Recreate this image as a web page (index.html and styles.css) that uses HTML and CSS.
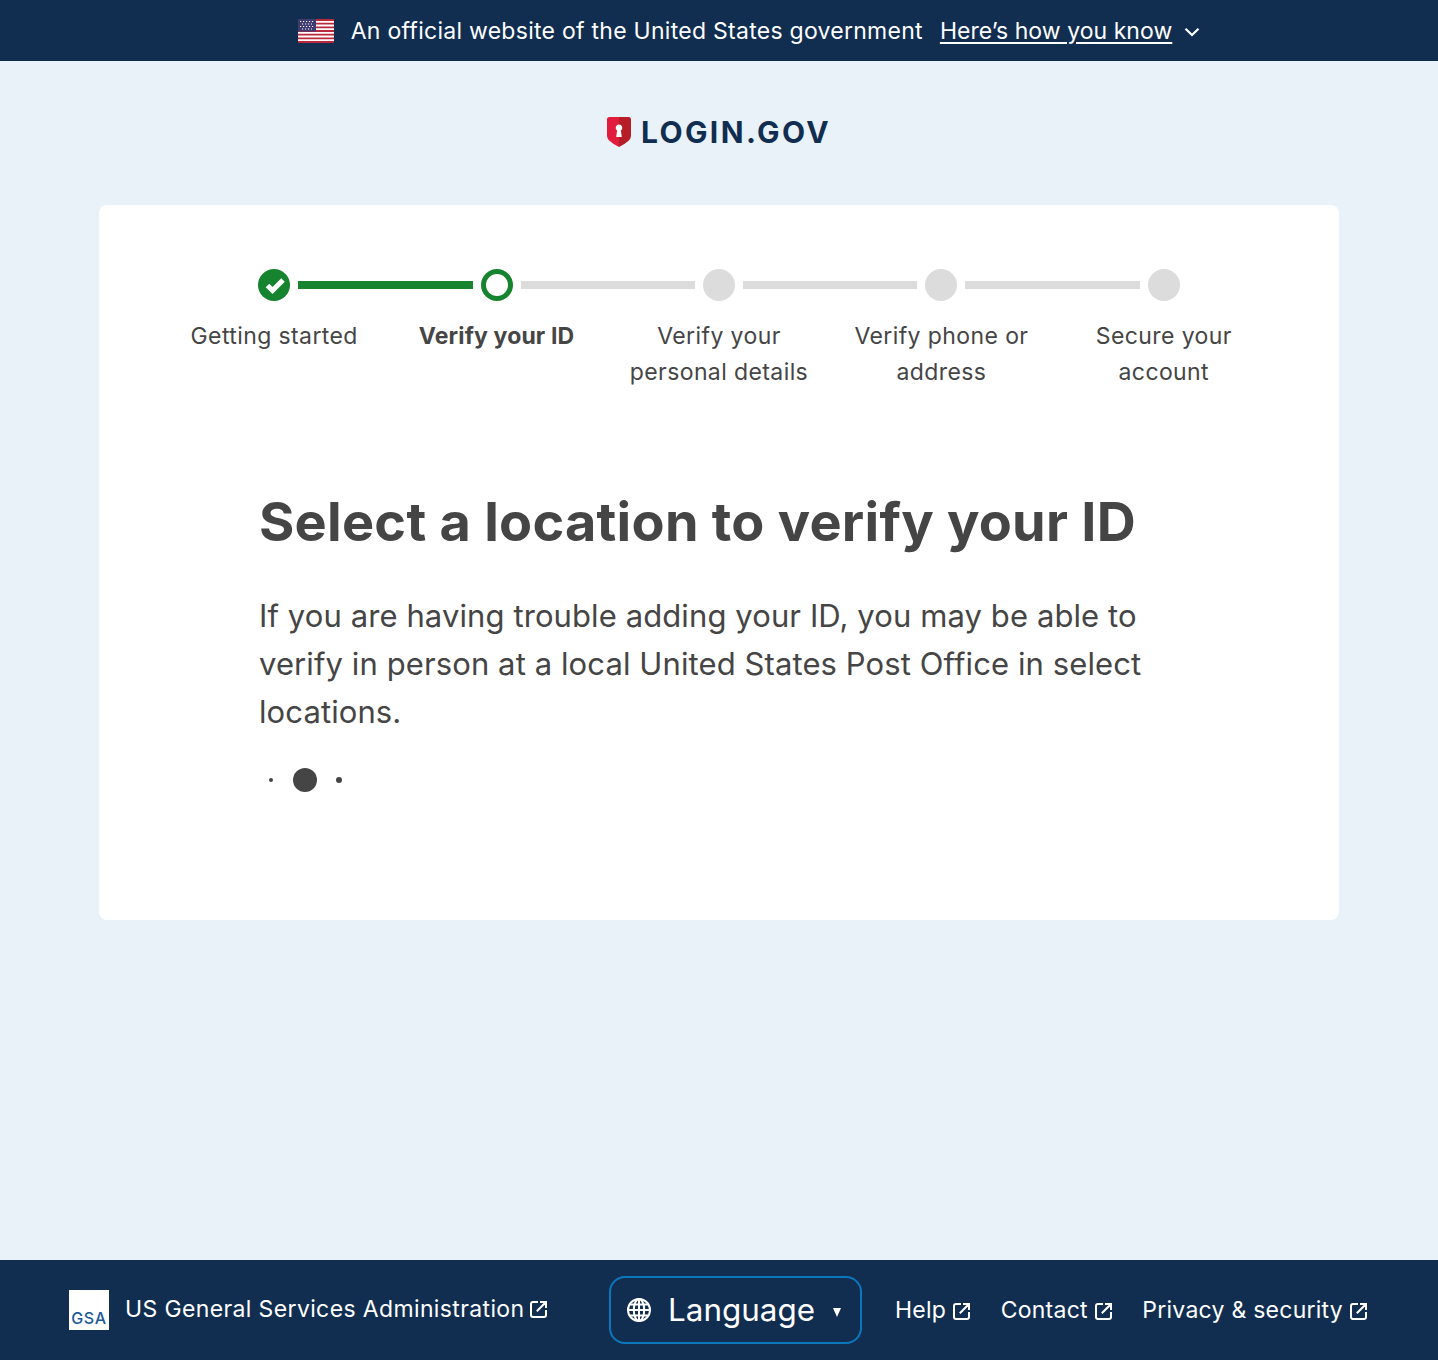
FILE: index.html
```html
<!DOCTYPE html>
<html lang="en">
<head>
    <meta charset="UTF-8">
    <meta name="viewport" content="width=device-width, initial-scale=1.0">
    <title>Login.gov</title>
    <link rel="stylesheet" href="styles.css">
</head>
<body>
    <svg class="icon-defs" width="0" height="0" aria-hidden="true">
        <symbol id="launch" viewBox="0 0 18 18">
            <path d="M8 2H3A2 2 0 0 0 1 4v11a2 2 0 0 0 2 2h11a2 2 0 0 0 2-2v-5M6.800 11.200 15.800 2.200M10 2h6v6" fill="none" stroke="currentColor" stroke-width="2"/>
        </symbol>
    </svg>

    <div class="banner">
        <svg class="flag" viewBox="0 0 36 24" aria-hidden="true">
            <rect width="36" height="24" fill="#fff"/>
            <path d="M0 1h36M0 4.700h36M0 8.400h36M0 12h36M0 15.700h36M0 19.400h36M0 23h36" stroke="#b9283c" stroke-width="1.800"/>
            <rect width="18" height="12.500" fill="#3e3a72"/>
            <path d="M2 2.500h14M4 5h10M2 7.500h14M4 10h10" stroke="#fff" stroke-width="1.100" stroke-dasharray="1.200 1.800"/>
        </svg>
        <span class="banner-text">An official website of the United States government</span>
        <a class="banner-link" href="#">Here’s how you know</a>
        <svg class="chevron" viewBox="0 0 16 10" aria-hidden="true">
            <path d="M1.500 1.800 8 8l6.500-6.200" fill="none" stroke="#fff" stroke-width="2.200"/>
        </svg>
    </div>

    <main class="page">
        <div class="logo">
            <svg class="shield" viewBox="0 0 24 30" aria-hidden="true">
                <path d="M12 0H2.500A2.500 2.500 0 0 0 0 2.500V19Q0 24 12 30z" fill="#e21c3d"/>
                <path d="M12 0h9.500A2.500 2.500 0 0 1 24 2.500V19Q24 24 12 30z" fill="#b51d28"/>
                <path d="M12 7.500a3.300 3.300 0 0 1 1.900 6l.9 6.500H9.200l.9-6.500a3.300 3.300 0 0 1 1.900-6z" fill="#fff"/>
            </svg>
            <span class="logo-text">LOGIN.GOV</span>
        </div>

        <section class="card">
            <ol class="steps">
                <li class="step step-done">
                    <span class="step-dot">
                        <svg viewBox="0 0 32 32" aria-hidden="true">
                            <path d="M9.500 16.500l5 5L25 11" fill="none" stroke="#fff" stroke-width="5"/>
                        </svg>
                    </span>
                    <span class="step-label">Getting started</span>
                </li>
                <li class="step step-current">
                    <span class="step-dot"></span>
                    <span class="step-label">Verify your ID</span>
                </li>
                <li class="step">
                    <span class="step-dot"></span>
                    <span class="step-label">Verify your personal details</span>
                </li>
                <li class="step">
                    <span class="step-dot"></span>
                    <span class="step-label">Verify phone or address</span>
                </li>
                <li class="step">
                    <span class="step-dot"></span>
                    <span class="step-label">Secure your account</span>
                </li>
            </ol>

            <div class="content">
                <h1>Select a location to verify your ID</h1>
                <p>If you are having trouble adding your ID, you may be able to verify in person at a local United States Post Office in select locations.</p>
                <div class="spinner">
                    <span class="spinner-dot spinner-small"></span>
                    <span class="spinner-dot spinner-big"></span>
                    <span class="spinner-dot spinner-mid"></span>
                </div>
            </div>
        </section>
    </main>

    <footer class="footer">
        <a class="gsa" href="#">
            <span class="gsa-logo">GSA</span>
            <span class="gsa-name">US General Services Administration</span>
            <svg class="launch gsa-launch"><use href="#launch"/></svg>
        </a>
        <button class="language" type="button">
            <svg class="globe" viewBox="0 0 24 24" aria-hidden="true">
                <g fill="none" stroke="#fff" stroke-width="2">
                    <circle cx="12" cy="12" r="11"/>
                    <ellipse cx="12" cy="12" rx="5.200" ry="11"/>
                    <path d="M12 1v22M1 12h22M2.600 6.500h18.800M2.600 17.500h18.800"/>
                </g>
            </svg>
            <span class="language-text">Language</span>
            <span class="caret"></span>
        </button>
        <nav class="footer-links">
            <a href="#">Help<svg class="launch"><use href="#launch"/></svg></a>
            <a href="#">Contact<svg class="launch"><use href="#launch"/></svg></a>
            <a href="#">Privacy &amp; security<svg class="launch"><use href="#launch"/></svg></a>
        </nav>
    </footer>
</body>
</html>
```

FILE: styles.css
```css
* {
    box-sizing: border-box;
}
body {
    font-family: Inter, "Liberation Sans", sans-serif;
    display: flex;
    flex-direction: column;
    min-height: 1360px;
    margin: 0;
    background-color: #E9F1F9;
    color: #454545;
}
a {
    color: #ffffff;
    text-decoration: none;
}
.icon-defs {
    position: absolute;
}

.banner {
    display: flex;
    justify-content: center;
    align-items: center;
    height: 61px;
    background-color: #112E51;
    color: #ffffff;
    font-size: 23px;
    padding-left: 60px;
}
.flag {
    width: 36px;
    height: 24px;
    margin-right: 17px;
}
.banner-text {
    margin-right: 17px;
    letter-spacing: .27px;
}
.banner-link {
    text-decoration: underline;
    text-underline-offset: 3px;
    letter-spacing: .05px;
}
.chevron {
    width: 16px;
    height: 10px;
    margin-left: 12px;
    margin-top: 3px;
}

.page {
    flex: 1;
    padding: 0 99px;
}
.logo {
    display: flex;
    justify-content: center;
    align-items: center;
    gap: 10px;
    height: 144px;
    padding-bottom: 2px;
}
.shield {
    width: 24px;
    height: 30px;
}
.logo-text {
    color: #112E51;
    font-size: 30px;
    font-weight: 700;
    letter-spacing: 2.400px;
}

.card {
    height: 715px;
    background-color: #ffffff;
    border-radius: 8px;
    padding: 64px;
}
.steps {
    display: grid;
    grid-template-columns: repeat(5, 1fr);
    list-style: none;
    margin: 0;
    padding: 0;
}
.step {
    position: relative;
    display: flex;
    flex-direction: column;
    align-items: center;
    text-align: center;
    font-size: 23px;
    line-height: 36px;
    letter-spacing: .4px;
}
.step:not(:last-child)::after {
    content: "";
    position: absolute;
    top: 12px;
    left: calc(50% + 24px);
    width: calc(100% - 48px);
    height: 8px;
    background-color: #DCDCDC;
}
.step-done::after {
    background-color: #16832E !important;
}
.step-dot {
    width: 32px;
    height: 32px;
    border-radius: 50%;
    background-color: #DCDCDC;
    margin-bottom: 17px;
}
.step-dot svg {
    display: block;
    width: 32px;
    height: 32px;
}
.step-done .step-dot {
    background-color: #16832E;
}
.step-current .step-dot {
    background-color: #ffffff;
    border: 5px solid #16832E;
}
.step-current .step-label {
    font-weight: 700;
    letter-spacing: .15px;
}
.step-label {
    width: 190px;
}

.content {
    margin: 97px 0 0 96px;
    width: 900px;
}
h1 {
    margin: 0;
    font-size: 54px;
    line-height: 70px;
    font-weight: 700;
    letter-spacing: .26px;
}
.content p {
    margin: 35px 0 0;
    font-size: 31px;
    line-height: 48px;
    letter-spacing: .1px;
}
.spinner {
    display: flex;
    align-items: center;
    height: 24px;
    margin-top: 32px;
    padding-left: 10px;
}
.spinner-dot {
    border-radius: 50%;
    background-color: #454545;
}
.spinner-small {
    width: 4px;
    height: 4px;
}
.spinner-big {
    width: 24px;
    height: 24px;
    margin: 0 19px 0 20px;
}
.spinner-mid {
    width: 6px;
    height: 6px;
}

.footer {
    display: flex;
    align-items: center;
    height: 100px;
    padding: 0 70px 0 69px;
    background-color: #112E51;
    color: #ffffff;
    font-size: 23px;
}
.gsa {
    display: flex;
    align-items: center;
    letter-spacing: .37px;
}
.gsa-name {
    margin-bottom: 2px;
}
.gsa-logo {
    display: flex;
    align-items: flex-end;
    justify-content: center;
    width: 40px;
    height: 40px;
    margin-right: 16px;
    background-color: #ffffff;
    color: #1B5A9A;
    font-size: 16px;
    font-weight: 500;
    line-height: 24px;
    letter-spacing: .6px;
}
.launch {
    width: 18px;
    height: 18px;
    margin-left: 7px;
    vertical-align: -2px;
}
.gsa-launch {
    margin: 0 0 2px 6px;
}
.language {
    display: flex;
    align-items: center;
    width: 253px;
    height: 68px;
    margin-left: auto;
    padding: 0 0 0 16px;
    background: transparent;
    border: 2px solid #0B78BE;
    border-radius: 16px;
    color: #ffffff;
    font-family: inherit;
    font-size: 31.400px;
}
.globe {
    width: 24px;
    height: 24px;
    margin-right: 17px;
}
.caret {
    width: 0;
    height: 0;
    margin: 5px 0 0 18px;
    border-left: 4.500px solid transparent;
    border-right: 4.500px solid transparent;
    border-top: 9px solid #ffffff;
}
.footer-links {
    display: flex;
    gap: 29.500px;
    margin-left: 33px;
    letter-spacing: .25px;
}
.footer-links a {
    white-space: nowrap;
}
```
